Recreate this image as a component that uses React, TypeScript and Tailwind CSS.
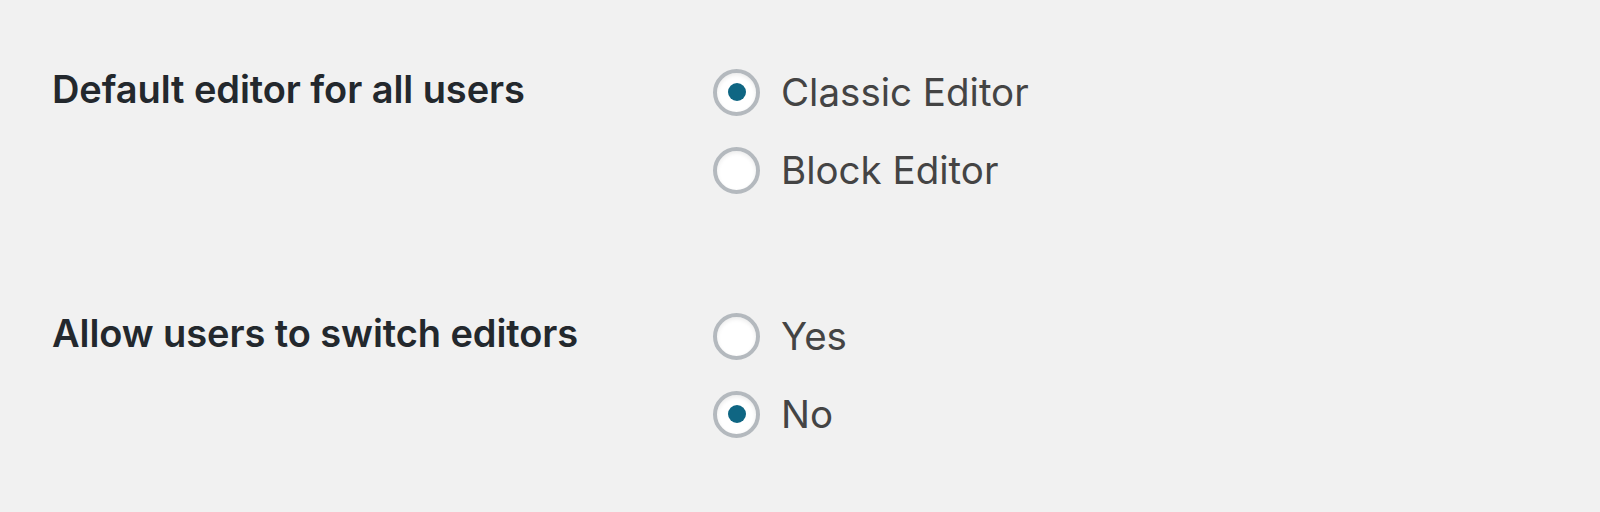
import React from "react";

type Option = { label: string; checked: boolean };

const settings: { title: string; options: Option[] }[] = [
  {
    title: "Default editor for all users",
    options: [
      { label: "Classic Editor", checked: true },
      { label: "Block Editor", checked: false },
    ],
  },
  {
    title: "Allow users to switch editors",
    options: [
      { label: "Yes", checked: false },
      { label: "No", checked: true },
    ],
  },
];

function Radio({ checked }: { checked: boolean }) {
  return (
    <span className="flex items-center justify-center w-[47px] h-[47px] rounded-full border-[4px] border-[#b4b9be] bg-white shadow-[inset_0_2px_4px_rgba(0,0,0,0.08)]">
      {checked && <span className="block w-[18px] h-[18px] rounded-full bg-[#0f6683]" />}
    </span>
  );
}

export default function App() {
  return (
    <div
      className="w-full h-[512px] bg-[#f1f1f1] pt-[53px] overflow-hidden"
      style={{ fontFamily: "Inter, 'Noto Sans', sans-serif" }}
    >
      {settings.map((s, i) => (
        <div key={i} className={`flex ${i > 0 ? "mt-[88px]" : ""}`}>
          <div className="w-[713px] pl-[52px] text-[38px] leading-[72px] font-semibold text-[#23282d] tracking-[-0.08px]">
            {s.title}
          </div>
          <div className="flex flex-col">
            {s.options.map((o, j) => (
              <label key={j} className="flex items-center h-[78px] gap-[21px]">
                <Radio checked={o.checked} />
                <span className="text-[38.5px] text-[#444444] leading-[78px]">{o.label}</span>
              </label>
            ))}
          </div>
        </div>
      ))}
    </div>
  );
}
